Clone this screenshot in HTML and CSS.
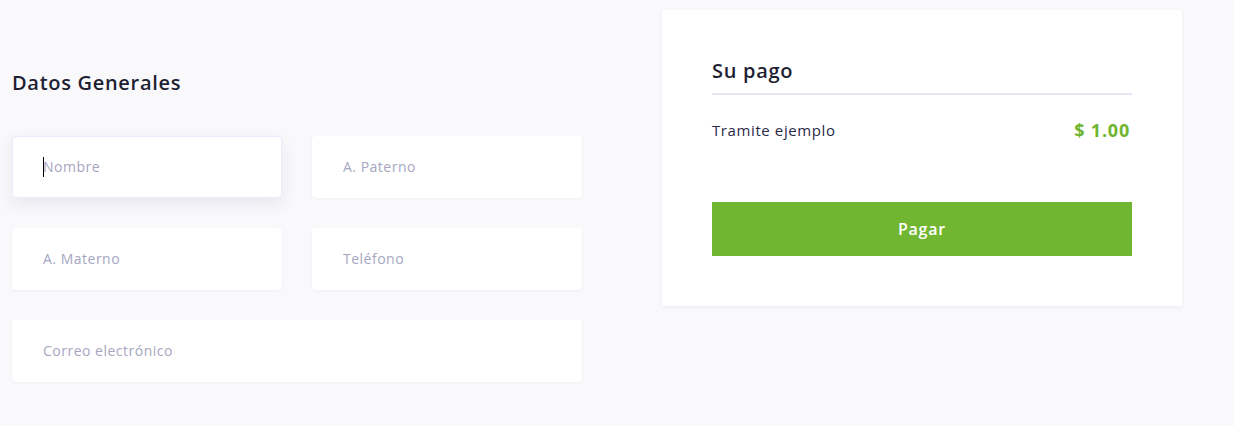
FILE: index.html
```html
<!DOCTYPE html>
<html lang="es">
<head>
<meta charset="utf-8">
<title>Pago</title>
<link rel="stylesheet" href="styles.css">
</head>
<body>
<div class="page">
  <section class="general">
    <h2 class="section-title">Datos Generales</h2>
    <div class="fields">
      <div class="field field-focus">
        <input class="input" type="text" placeholder="Nombre">
        <span class="caret"></span>
      </div>
      <div class="field"><input class="input" type="text" placeholder="A. Paterno"></div>
      <div class="field"><input class="input" type="text" placeholder="A. Materno"></div>
      <div class="field"><input class="input" type="text" placeholder="Teléfono"></div>
      <div class="field field-wide"><input class="input" type="text" placeholder="Correo electrónico"></div>
    </div>
  </section>
  <aside class="card">
    <h2 class="card-title">Su pago</h2>
    <div class="line-item">
      <span class="item-name">Tramite ejemplo</span>
      <span class="item-amount">$ 1.00</span>
    </div>
    <button class="pay-btn" type="button">Pagar</button>
  </aside>
</div>
</body>
</html>
```

FILE: styles.css
```css
* { box-sizing: border-box; }

html, body {
  margin: 0;
  padding: 0;
}

body {
  background: #f9f9fc;
  font-family: "Open Sans", "Noto Sans", sans-serif;
  color: #1f1f33;
  width: 1234px;
  height: 426px;
  overflow: hidden;
}

.page {
  display: flex;
  align-items: flex-start;
  gap: 80px;
  padding: 10px 0 0 12px;
}

.general {
  width: 570px;
  padding-top: 59px;
}

.section-title {
  margin: 0;
  font-size: 20px;
  line-height: 28px;
  font-weight: 600;
  letter-spacing: 0.7px;
  color: #1f1f33;
}

.fields {
  margin-top: 39px;
  display: grid;
  grid-template-columns: 270px 270px;
  grid-auto-rows: 62px;
  gap: 30px;
}

.field {
  position: relative;
  background: #fff;
  border-radius: 4px;
  box-shadow: 0 1px 3px rgba(40, 40, 90, 0.05);
  border: 1px solid transparent;
}

.field-wide {
  grid-column: 1 / span 2;
}

.field-focus {
  border-color: #ecebfb;
  box-shadow: 0 6px 16px rgba(40, 40, 90, 0.09);
}

.input {
  width: 100%;
  height: 100%;
  border: 0;
  outline: 0;
  background: transparent;
  padding: 0 0 2px 30px;
  font-family: inherit;
  font-size: 14px;
  letter-spacing: 0.5px;
  color: #1f1f33;
}

.input::placeholder {
  color: #a6a6c2;
  opacity: 1;
}

.caret {
  position: absolute;
  left: 30px;
  top: 20px;
  width: 1px;
  height: 20px;
  background: #000;
}

.card {
  width: 520px;
  background: #fff;
  padding: 47px 50px 50px;
  box-shadow: 0 1px 4px rgba(40, 40, 90, 0.06);
}

.card-title {
  margin: 0;
  font-size: 20px;
  line-height: 28px;
  font-weight: 600;
  letter-spacing: 0.7px;
  color: #1f1f33;
  padding-bottom: 8px;
  border-bottom: 2px solid #e7e6f6;
}

.line-item {
  display: flex;
  justify-content: space-between;
  align-items: center;
  margin-top: 23px;
  height: 24px;
  padding-right: 2px;
}

.item-name {
  font-size: 15px;
  letter-spacing: 0.6px;
  color: #2a2a48;
}

.item-amount {
  font-size: 18px;
  font-weight: 700;
  letter-spacing: 0.8px;
  color: #6fb52f;
}

.pay-btn {
  display: block;
  width: 100%;
  height: 54px;
  margin-top: 60px;
  border: 0;
  background: #71b631;
  color: #fff;
  font-family: inherit;
  font-size: 16px;
  font-weight: 600;
  letter-spacing: 0.8px;
  cursor: pointer;
  padding-bottom: 2px;
}
```
